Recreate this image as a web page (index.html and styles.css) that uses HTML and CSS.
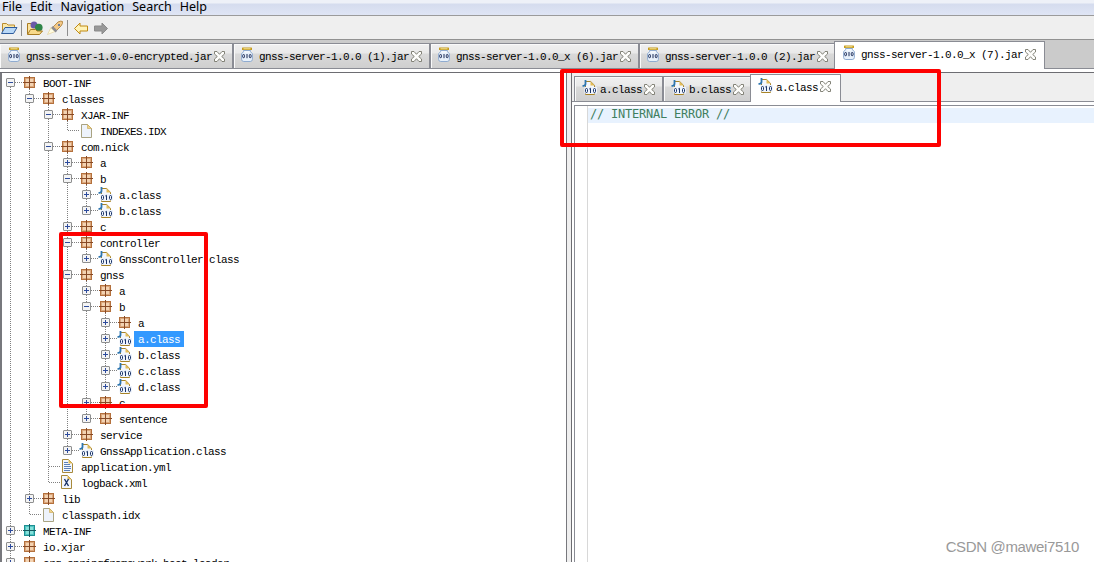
FILE: index.html
```html
<!DOCTYPE html>
<html lang="en">
<head>
  <meta charset="UTF-8">
  <title>Java Decompiler</title>
  <link rel="stylesheet" href="styles.css">
</head>
<body>
  <!-- Shared icons -->
  <svg class="defs" width="0" height="0">
    <symbol id="jar" viewBox="0 0 12 16">
      <rect x="1" y="0.5" width="10" height="2.6" rx="0.6" fill="#c49a1c"/>
      <path d="M2.5 1.8h7" stroke="#f6e49a"/>
      <path d="M2.5 3.5h7v1.2l1.9 2v5.6q0 2.2-2.2 2.2H2.8q-2.2 0-2.2-2.2V6.7l1.9-2z" fill="#e8f1fb" stroke="#8fabd0"/>
      <path d="M3.5 5h5" stroke="#fff"/>
      <rect x="1.7" y="7.5" width="1.8" height="3.2" rx="0.9" fill="none" stroke="#1c2c58"/>
      <path d="M6 7v4.200" stroke="#1c2c58"/>
      <rect x="8.3" y="7.5" width="1.8" height="3.2" rx="0.9" fill="none" stroke="#1c2c58"/>
    </symbol>
    <symbol id="close" viewBox="0 0 11 11">
      <path d="M0.5 0.5h2.500l2.500 2.800 2.500-2.800h2.500v2.500L7.700 5.500l2.800 2.500v2.500h-2.500l-2.500-2.800-2.500 2.800h-2.500v-2.500l2.800-2.500-2.800-2.500z" fill="#fdfdfb" stroke="#77776b" stroke-width="0.9"/>
    </symbol>
    <symbol id="class" viewBox="0 0 15 16">
      <path d="M3.5 1.5h5.200l3.8 3.8v9.2h-9z" fill="#f3f7fd" stroke="#a88428"/>
      <path d="M8.5 1.5v4h4z" fill="#e4bd58"/>
      <path d="M3.500 0v3.800q0 2-2 2H0.500" fill="none" stroke="#2e76b0" stroke-width="1.800"/>
      <rect x="2.500" y="7" width="12.500" height="6.5" fill="#eef4fd"/>
      <rect x="3.5" y="8.5" width="2" height="4" rx="1" fill="none" stroke="#1b3468"/>
      <path d="M7.300 9l1.200-.7v4.700" fill="none" stroke="#1b3468"/>
      <rect x="11.5" y="8.5" width="2" height="4" rx="1" fill="none" stroke="#1b3468"/>
    </symbol>
    <symbol id="package" viewBox="-1 -1 13 13">
      <rect x="0.5" y="0.5" width="10" height="10" fill="#dba77c" stroke="#b4713d"/>
      <path d="M2 2h3v3H2zM6 2h3v3H6zM2 6h3v3H2zM6 6h3v3H6z" fill="#f3d3b2"/>
      <path d="M5.5-1v13M-1 5.5h13" stroke="#874a26"/>
    </symbol>
    <symbol id="meta" viewBox="-1 -1 13 13">
      <rect x="0.5" y="0.5" width="10" height="10" fill="#4fc4c2" stroke="#1d8f92"/>
      <path d="M2 2h3v3H2zM6 2h3v3H6zM2 6h3v3H2zM6 6h3v3H6z" fill="#86e0da"/>
      <path d="M5.5-1v13M-1 5.5h13" stroke="#14585e"/>
    </symbol>
    <symbol id="file" viewBox="0 0 11 14">
      <path d="M0.5 0.5h6l4 4v9h-10z" fill="#eef3fb" stroke="#a9a382"/>
      <path d="M6.5 0.5v4h4z" fill="#f0d58a" stroke="#c9a550" stroke-width="0.6"/>
    </symbol>
    <symbol id="text" viewBox="0 0 11 14">
      <path d="M0.5 0.5h6l4 4v9h-10z" fill="#f3f7fd" stroke="#a88a3c"/>
      <path d="M6.5 0.5v4h4z" fill="#e4bd58"/>
      <path d="M2 3.5h4M2 5.5h6M2 7.5h7M2 9.5h7M2 11.5h6" stroke="#5b7fb8"/>
    </symbol>
    <symbol id="xml" viewBox="0 0 11 14">
      <path d="M0.5 0.5h6l4 4v9h-10z" fill="#f3f7fd" stroke="#a88a3c"/>
      <path d="M6.5 0.5v4h4z" fill="#e4bd58"/>
      <path d="M3.500 4l4 7M7.500 4l-4 7" stroke="#1b3468" stroke-width="1.4"/>
    </symbol>
  </svg>

  <div class="menubar">
    <span>File</span><span>Edit</span><span>Navigation</span><span>Search</span><span>Help</span>
  </div>

  <div class="toolbar">
    <svg width="112" height="23" viewBox="0 16 112 23">
      <!-- open file -->
      <path d="M2.5 33v-9.5h4l1.500 1.500h6.500v3" fill="#fbe8a8" stroke="#b98a2c"/>
      <path d="M1.500 33.500l3.500-6h12l-3.500 6z" fill="#b9d8f7" stroke="#2f5c9c"/>
      <path d="M21.500 20v16M67.500 20v16" stroke="#8e8e8e"/>
      <!-- open type -->
      <path d="M27.500 34v-10.500h4l1.500 1.500h6v3" fill="#fbe3a0" stroke="#a87b22"/>
      <circle cx="34" cy="25" r="3.500" fill="#6a5aa8"/>
      <circle cx="38.800" cy="27.500" r="3.800" fill="#2f8548"/>
      <path d="M27.500 34.500l3-5h5l1.500 1.500h5.500l-3 3.500z" fill="#f7d98a" stroke="#a87b22"/>
      <!-- search -->
      <path d="M47.500 34.500l3.500-7 4 4z" fill="#fffbe0" stroke="#e0cd90" stroke-width=".6"/>
      <path d="M52.500 27.500l5.500-5.500q3-1.500 4.500-.5 .5 2-1.500 4.500l-5 5z" fill="#f3c988" stroke="#a9782e" stroke-width=".8"/>
      <path d="M52 27l4.500 4.500" stroke="#8b8b92" stroke-width="2.500"/>
      <circle cx="59" cy="25" r="1" fill="#4163a0"/>
      <!-- back / forward -->
      <path d="M74.500 28.500l5.500-5.500v3h7.500v5H80v3z" fill="#fff3b8" stroke="#c08a12"/>
      <path d="M107.500 28.500l-5.500-5.500v3h-7.500v5h7.500v3z" fill="#999" stroke="#8b8b8b"/>
    </svg>
  </div>

  <div class="tabs jar-tabs">
    <div class="tab"><svg class="jar"><use href="#jar"/></svg><span>gnss-server-1.0.0-encrypted.jar</span><svg class="close"><use href="#close"/></svg></div>
    <div class="tab"><svg class="jar"><use href="#jar"/></svg><span>gnss-server-1.0.0 (1).jar</span><svg class="close"><use href="#close"/></svg></div>
    <div class="tab"><svg class="jar"><use href="#jar"/></svg><span>gnss-server-1.0.0_x (6).jar</span><svg class="close"><use href="#close"/></svg></div>
    <div class="tab"><svg class="jar"><use href="#jar"/></svg><span>gnss-server-1.0.0 (2).jar</span><svg class="close"><use href="#close"/></svg></div>
    <div class="tab active"><svg class="jar"><use href="#jar"/></svg><span>gnss-server-1.0.0_x (7).jar</span><svg class="close"><use href="#close"/></svg></div>
  </div>

  <div class="main">
    <div class="tree" id="tree"></div>
    <div class="divider"></div>
    <div class="viewer">
      <div class="tabs class-tabs">
        <div class="tab"><svg class="cls"><use href="#class"/></svg><span>a.class</span><svg class="close"><use href="#close"/></svg></div>
        <div class="tab"><svg class="cls"><use href="#class"/></svg><span>b.class</span><svg class="close"><use href="#close"/></svg></div>
        <div class="tab active"><svg class="cls"><use href="#class"/></svg><span>a.class</span><svg class="close"><use href="#close"/></svg></div>
      </div>
      <div class="editor">
        <div class="gutter"></div>
        <div class="code"><div class="line">// INTERNAL ERROR //</div></div>
      </div>
    </div>
  </div>

  <div class="mark mark-tree"></div>
  <div class="mark mark-editor"></div>
  <div class="watermark">CSDN @mawei7510</div>

  <script src="tree.js"></script>
</body>
</html>
```
FILE: styles.css
```css
body {
  margin: 0;
  width: 1094px;
  height: 562px;
  overflow: hidden;
  display: flex;
  flex-direction: column;
  background: #fff;
  color: #000;
  font-family: "Liberation Mono", monospace;
  font-size: 11px;
  letter-spacing: -0.6px;
}

svg {
  display: block;
  flex: none;
}

.defs {
  position: absolute;
}

.menubar {
  height: 15px;
  flex: none;
  display: flex;
  gap: 8px;
  padding-left: 2px;
  background: linear-gradient(#eef1f8 0, #eef1f8 3px, #d5dcee 4px, #dfe5f5 15px);
  border-bottom: 1px solid #9b9b9b;
  font: 12.5px/13px "Noto Sans", sans-serif;
  letter-spacing: 0;
}

.toolbar {
  height: 23px;
  flex: none;
  background: #efefef;
  border-bottom: 1px solid #919191;
}

.tabs {
  display: flex;
  align-items: flex-end;
  white-space: pre;
}

.tab {
  box-sizing: border-box;
  flex: none;
  display: flex;
  align-items: center;
  height: 26px;
  border: solid #8a8c94;
  border-width: 1px 2px 1px 0;
  background: linear-gradient(#f0f0f0 0, #e9e9e9 9px, #d9d9d9 10px, #cfcfcf 100%);
  box-shadow: inset 1px 1px #fafafa;
}

.tab span {
  padding-top: 2px;
}

.tab.active {
  background: #fff;
  border-width: 1px 1px 0 1px;
  box-shadow: none;
}

.jar-tabs {
  height: 29px;
  flex: none;
  background: #cbcbcb;
  box-shadow: inset 0 -1px #8a8c94;
}

.jar-tabs .tab {
  padding-left: 8px;
  width: 197px;
}

.jar-tabs .tab:nth-child(1) {
  width: 234px;
}

.jar-tabs .tab:nth-child(2) {
  padding-left: 7px;
}

.jar-tabs .tab:nth-child(3) {
  width: 209px;
  padding-left: 7px;
}

.jar-tabs .tab:nth-child(4) {
  padding-left: 7px;
}

.jar-tabs .tab.active {
  width: 211px;
  height: 28px;
  margin-left: -3px;
  padding: 0 0 3px 8px;
}

.jar {
  width: 12px;
  height: 16px;
  margin: -2px 6px 0 0;
}

.close {
  width: 11px;
  height: 11px;
  margin-left: 2px;
}

.main {
  flex: 1;
  min-height: 0;
  display: flex;
  margin-top: 3px;
  border-top: 1px solid #6d6d72;
}

.tree {
  box-sizing: border-box;
  width: 567px;
  padding-top: 2px;
  border-left: 2px solid #77787d;
  border-right: 1px solid #77787d;
  overflow: hidden;
}

.row {
  display: flex;
  height: 16px;
}

.row .label {
  height: 16px;
  line-height: 18px;
  padding: 0 4px;
  white-space: pre;
}

.row .selected {
  background: #3399ff;
  color: #fff;
}

.divider {
  width: 4px;
  background: #efefef;
}

.viewer {
  flex: 1;
  display: flex;
  flex-direction: column;
  border-left: 1px solid #6d6d72;
}

.class-tabs {
  height: 29px;
  flex: none;
  padding-left: 2px;
  background: #efefef;
  box-shadow: inset 0 -1px #8a8c94;
}

.class-tabs .tab {
  width: 90px;
  padding-left: 7px;
  border-left-width: 1px;
}

.class-tabs .tab:nth-child(2) {
  width: 88px;
  border-left-width: 0;
}

.class-tabs .tab.active {
  width: 91px;
  height: 28px;
  margin-left: -2px;
  padding: 0 0 4px 7px;
}

.cls {
  width: 15px;
  height: 16px;
  margin: -2px 3px 0 0;
}

.editor {
  flex: 1;
  display: flex;
  margin: 3px 0 0 2px;
  border-top: 1px solid #8a8c94;
  border-left: 1px solid #8a8c94;
}

.gutter {
  width: 12px;
  border-right: 1px solid #d8d8d8;
}

.code {
  flex: 1;
  padding-top: 2px;
}

.line {
  height: 15px;
  padding-left: 2px;
  background: #e8f2fe;
  color: #3f7f5f;
  font: 12px/13px "DejaVu Sans Mono", monospace;
  letter-spacing: -0.23px;
}

/* annotations over the window */
.mark {
  position: absolute;
  box-sizing: border-box;
  border: 4px solid #fe0000;
  border-radius: 2px;
}

.mark-tree {
  left: 59px;
  top: 232px;
  width: 149px;
  height: 176px;
}

.mark-editor {
  left: 560px;
  top: 69px;
  width: 381px;
  height: 78px;
}

.watermark {
  position: absolute;
  right: 15px;
  bottom: 5px;
  color: #999;
  font: 15px/20px "Liberation Sans", sans-serif;
  letter-spacing: -0.35px;
}
```
FILE: tree.js
```javascript
// [depth, state, icon, label] - state is '-' open, '+' closed, '' leaf
const nodes = [
  [0, '-', 'package', 'BOOT-INF'],
  [1, '-', 'package', 'classes'],
  [2, '-', 'package', 'XJAR-INF'],
  [3, '', 'file', 'INDEXES.IDX'],
  [2, '-', 'package', 'com.nick'],
  [3, '+', 'package', 'a'],
  [3, '-', 'package', 'b'],
  [4, '+', 'class', 'a.class'],
  [4, '+', 'class', 'b.class'],
  [3, '+', 'package', 'c'],
  [3, '-', 'package', 'controller'],
  [4, '+', 'class', 'GnssController.class'],
  [3, '-', 'package', 'gnss'],
  [4, '+', 'package', 'a'],
  [4, '-', 'package', 'b'],
  [5, '+', 'package', 'a'],
  [5, '+', 'class', 'a.class'],
  [5, '+', 'class', 'b.class'],
  [5, '+', 'class', 'c.class'],
  [5, '+', 'class', 'd.class'],
  [4, '+', 'package', 'c'],
  [4, '+', 'package', 'sentence'],
  [3, '+', 'package', 'service'],
  [3, '+', 'class', 'GnssApplication.class'],
  [2, '', 'text', 'application.yml'],
  [2, '', 'xml', 'logback.xml'],
  [1, '+', 'package', 'lib'],
  [1, '', 'file', 'classpath.idx'],
  [0, '+', 'meta', 'META-INF'],
  [0, '+', 'package', 'io.xjar'],
  [0, '+', 'package', 'org.springframework.boot.loader']
];
const selectedIndex = 16;

// icon name -> [dx, y, width, height], dx is from the icon column centre
const iconBox = {
  package: [-6.5, 1, 13, 13],
  meta: [-6.5, 1, 13, 13],
  class: [-7.5, 0, 15, 16],
  file: [-5.5, 1, 11, 14],
  text: [-5.5, 0, 11, 14],
  xml: [-6.5, 0, 11, 14]
};

function hasNext(index, depth) {
  for (let i = index + 1; i < nodes.length; i++) {
    if (nodes[i][0] < depth) return false;
    if (nodes[i][0] === depth) return true;
  }
  return false;
}

function drawRow(node, index) {
  const [depth, state, icon, label] = node;
  const x = 8.5 + depth * 19;
  const width = 37 + depth * 19;
  let lines = '';

  for (let d = 0; d < depth; d++) {
    if (hasNext(index, d)) lines += `M${8.5 + d * 19} 0v16`;
  }
  if (index > 0) lines += `M${x} 0v8`;
  if (hasNext(index, depth)) lines += `M${x} 8v8`;
  if (state === '-') lines += `M${x + 19} 14v2`;
  lines += `M${x + 0.5} 7.5h11`;

  let toggle = '';
  if (state) {
    toggle = `<rect x="${x - 4}" y="3.5" width="8" height="8" rx="0.5" fill="#f4f4f4" stroke="#8e8f8f"/>` +
      `<path d="M${x - 2.5} 7.5h5${state === '+' ? `M${x} 5v5` : ''}" stroke="#2d4b9c"/>`;
  }

  const [dx, y, w, h] = iconBox[icon];
  return `<div class="row"><svg width="${width}" height="16">` +
    `<path d="${lines}" stroke="#808080" stroke-dasharray="1 1"/>${toggle}` +
    `<use href="#${icon}" x="${x + 19 + dx}" y="${y}" width="${w}" height="${h}"/></svg>` +
    `<span class="label${index === selectedIndex ? ' selected' : ''}">${label}</span></div>`;
}

document.getElementById('tree').innerHTML = nodes.map(drawRow).join('');
```
